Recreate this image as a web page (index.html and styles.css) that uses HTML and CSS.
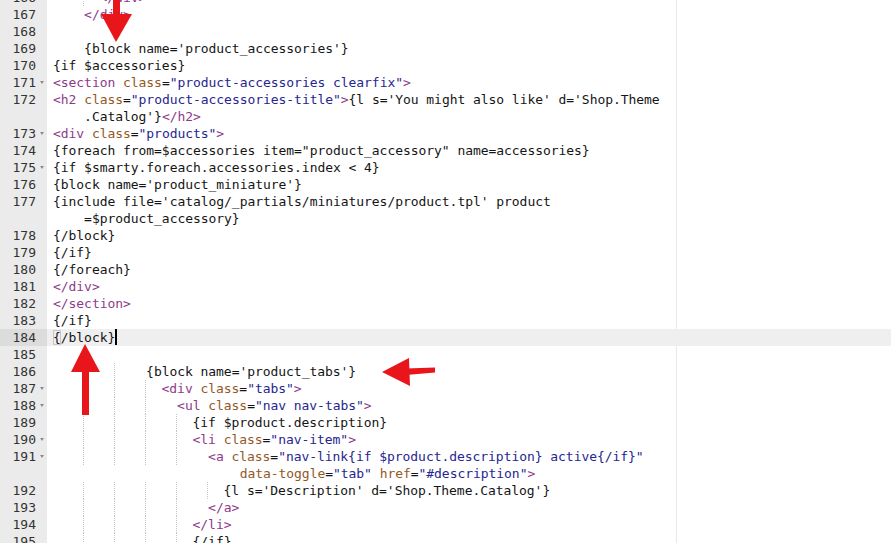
FILE: index.html
```html
<!DOCTYPE html>
<html lang="en">
<head>
    <meta charset="UTF-8">
    <title>product.tpl</title>
    <link rel="stylesheet" href="styles.css">
</head>
<body>
<div class="editor">
    <div class="row"><div class="gut"><span class="num">166</span><span class="fold"></span></div><div class="txt"><span class="ig"></span>  <span class="tag">&lt;/div&gt;</span></div></div>
    <div class="row"><div class="gut"><span class="num">167</span><span class="fold"></span></div><div class="txt">    <span class="tag">&lt;/div&gt;</span></div></div>
    <div class="row"><div class="gut"><span class="num">168</span><span class="fold"></span></div><div class="txt"></div></div>
    <div class="row"><div class="gut"><span class="num">169</span><span class="fold"></span></div><div class="txt">    {block name='product_accessories'}</div></div>
    <div class="row"><div class="gut"><span class="num">170</span><span class="fold"></span></div><div class="txt">{if $accessories}</div></div>
    <div class="row"><div class="gut"><span class="num">171</span><span class="fold on"></span></div><div class="txt"><span class="tag">&lt;section</span> <span class="atn">class</span>=<span class="str">"product-accessories clearfix"</span><span class="tag">&gt;</span></div></div>
    <div class="row"><div class="gut"><span class="num">172</span><span class="fold"></span></div><div class="txt"><span class="tag">&lt;h2</span> <span class="atn">class</span>=<span class="str">"product-accessories-title"</span><span class="tag">&gt;</span>{l s='You might also like' d='Shop.Theme<br>    .Catalog'}<span class="tag">&lt;/h2&gt;</span></div></div>
    <div class="row"><div class="gut"><span class="num">173</span><span class="fold on"></span></div><div class="txt"><span class="tag">&lt;div</span> <span class="atn">class</span>=<span class="str">"products"</span><span class="tag">&gt;</span></div></div>
    <div class="row"><div class="gut"><span class="num">174</span><span class="fold"></span></div><div class="txt">{foreach from=$accessories item="product_accessory" name=accessories}</div></div>
    <div class="row"><div class="gut"><span class="num">175</span><span class="fold on"></span></div><div class="txt">{if $smarty.foreach.accessories.index &lt; 4}</div></div>
    <div class="row"><div class="gut"><span class="num">176</span><span class="fold"></span></div><div class="txt">{block name='product_miniature'}</div></div>
    <div class="row"><div class="gut"><span class="num">177</span><span class="fold"></span></div><div class="txt">{include file='catalog/_partials/miniatures/product.tpl' product<br>    =$product_accessory}</div></div>
    <div class="row"><div class="gut"><span class="num">178</span><span class="fold"></span></div><div class="txt">{/block}</div></div>
    <div class="row"><div class="gut"><span class="num">179</span><span class="fold"></span></div><div class="txt">{/if}</div></div>
    <div class="row"><div class="gut"><span class="num">180</span><span class="fold"></span></div><div class="txt">{/foreach}</div></div>
    <div class="row"><div class="gut"><span class="num">181</span><span class="fold"></span></div><div class="txt"><span class="tag">&lt;/div&gt;</span></div></div>
    <div class="row"><div class="gut"><span class="num">182</span><span class="fold"></span></div><div class="txt"><span class="tag">&lt;/section&gt;</span></div></div>
    <div class="row"><div class="gut"><span class="num">183</span><span class="fold"></span></div><div class="txt">{/if}</div></div>
    <div class="row active"><div class="gut"><span class="num">184</span><span class="fold"></span></div><div class="txt"><span class="bm">{</span>/block}<span class="caret"></span></div></div>
    <div class="row"><div class="gut"><span class="num">185</span><span class="fold"></span></div><div class="txt"></div></div>
    <div class="row"><div class="gut"><span class="num">186</span><span class="fold"></span></div><div class="txt"><span class="ig"></span><span class="ig"></span>    {block name='product_tabs'}</div></div>
    <div class="row"><div class="gut"><span class="num">187</span><span class="fold on"></span></div><div class="txt"><span class="ig"></span><span class="ig"></span><span class="ig"></span>  <span class="tag">&lt;div</span> <span class="atn">class</span>=<span class="str">"tabs"</span><span class="tag">&gt;</span></div></div>
    <div class="row"><div class="gut"><span class="num">188</span><span class="fold on"></span></div><div class="txt"><span class="ig"></span><span class="ig"></span><span class="ig"></span>    <span class="tag">&lt;ul</span> <span class="atn">class</span>=<span class="str">"nav nav-tabs"</span><span class="tag">&gt;</span></div></div>
    <div class="row"><div class="gut"><span class="num">189</span><span class="fold"></span></div><div class="txt"><span class="ig"></span><span class="ig"></span><span class="ig"></span><span class="ig"></span>  {if $product.description}</div></div>
    <div class="row"><div class="gut"><span class="num">190</span><span class="fold on"></span></div><div class="txt"><span class="ig"></span><span class="ig"></span><span class="ig"></span><span class="ig"></span>  <span class="tag">&lt;li</span> <span class="atn">class</span>=<span class="str">"nav-item"</span><span class="tag">&gt;</span></div></div>
    <div class="row"><div class="gut"><span class="num">191</span><span class="fold on"></span></div><div class="txt"><span class="ig"></span><span class="ig"></span><span class="ig"></span><span class="ig"></span>    <span class="tag">&lt;a</span> <span class="atn">class</span>=<span class="str">"nav-link{if $product.description} active{/if}"</span><br>                        <span class="atn">data-toggle</span>=<span class="str">"tab"</span> <span class="atn">href</span>=<span class="str">"#description"</span><span class="tag">&gt;</span></div></div>
    <div class="row"><div class="gut"><span class="num">192</span><span class="fold"></span></div><div class="txt"><span class="ig"></span><span class="ig"></span><span class="ig"></span><span class="ig"></span><span class="ig"></span>  {l s='Description' d='Shop.Theme.Catalog'}</div></div>
    <div class="row"><div class="gut"><span class="num">193</span><span class="fold"></span></div><div class="txt"><span class="ig"></span><span class="ig"></span><span class="ig"></span><span class="ig"></span>    <span class="tag">&lt;/a&gt;</span></div></div>
    <div class="row"><div class="gut"><span class="num">194</span><span class="fold"></span></div><div class="txt"><span class="ig"></span><span class="ig"></span><span class="ig"></span><span class="ig"></span>  <span class="tag">&lt;/li&gt;</span></div></div>
    <div class="row"><div class="gut"><span class="num">195</span><span class="fold"></span></div><div class="txt"><span class="ig"></span><span class="ig"></span><span class="ig"></span><span class="ig"></span>  {/if}</div></div>
    <div class="row"><div class="gut"><span class="num">196</span><span class="fold"></span></div><div class="txt"></div></div>
</div>

<!-- red arrows drawn over the screenshot -->
<svg class="marks" width="891" height="543" viewBox="0 0 891 543">
    <g fill="#e8161b">
        <rect x="113" y="-2" width="7" height="18"/>
        <polygon points="101,14 132,14 116,42"/>
        <polygon points="85,344 71,372 100,372"/>
        <rect x="82" y="370" width="7" height="45"/>
        <polygon points="382,372 409,358 410,386"/>
        <polygon points="406,368.5 435,367.5 435,372.5 406,375"/>
    </g>
</svg>
</body>
</html>
```

FILE: styles.css
```css
* {
    margin: 0;
    padding: 0;
    box-sizing: border-box;
}
html, body {
    height: 100%;
    overflow: hidden;
    background: #fff;
}
body {
    position: relative;
    font-family: "DejaVu Sans Mono", "Liberation Mono", monospace;
    font-size: 13px;
    line-height: 17px;
    color: #151515;
}
.editor {
    margin-top: -11px;
    min-height: 600px;
    /* print margin at column 80 */
    background: linear-gradient(#e8e8e8, #e8e8e8) no-repeat 676px 0 / 1px 100%;
}
.row {
    display: flex;
}
.gut {
    flex: 0 0 47px;
    display: flex;
    align-items: flex-start;
    background: #ebebeb;
    color: #333;
}
.num {
    width: 36px;
    text-align: right;
}
.fold {
    width: 11px;
    height: 17px;
    display: flex;
    align-items: center;
    justify-content: center;
}
.fold.on::before {
    content: "";
    border-left: 2.5px solid transparent;
    border-right: 2.5px solid transparent;
    border-top: 3px solid #8c8c8c;
}
.txt {
    flex: 1;
    padding-left: 6px;
    white-space: pre;
    letter-spacing: -0.05px;
}
.row.active .gut {
    background: #dcdcdc;
}
.row.active .txt {
    background: #efefef;
}
.ig {
    display: inline-block;
    width: 31px;
    height: 17px;
    vertical-align: top;
    background: linear-gradient(to bottom, #c4c4c4 50%, transparent 50%) right top / 1px 2px repeat-y;
}
.tag {
    color: #8e3a8a;
}
.atn {
    color: #93581f;
}
.str {
    color: #26268f;
}
.bm {
    box-shadow: inset 0 0 0 1px #c6c6c6;
}
.caret {
    display: inline-block;
    width: 0;
    height: 16px;
    vertical-align: top;
    border-left: 2px solid #000;
}
.marks {
    position: absolute;
    top: 0;
    left: 0;
    pointer-events: none;
}
```
